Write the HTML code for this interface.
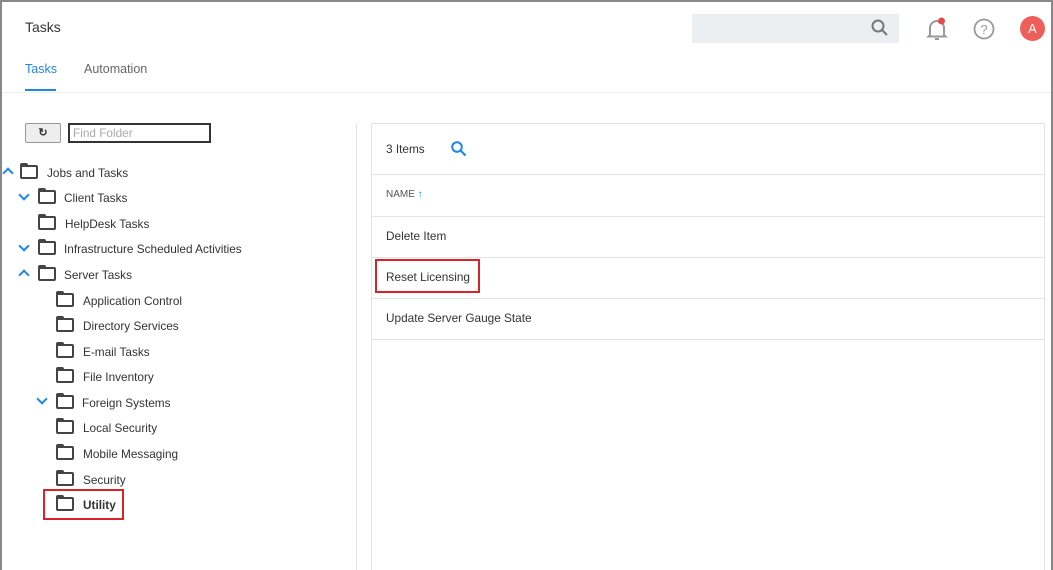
<!DOCTYPE html><html><head><style>
*{margin:0;padding:0;box-sizing:border-box}
body{width:1053px;height:570px;overflow:hidden;font-family:"Liberation Sans",sans-serif;color:#333;background:#fff;position:relative;font-size:11.8px}
.frame{position:absolute;inset:0;border:2px solid #888;border-bottom:none}
.a{position:absolute;white-space:nowrap}
.fold{position:absolute;width:18px;height:14px;border:2px solid #444;border-radius:2px;margin-top:1px}
.fold:before{content:"";position:absolute;left:-2px;top:-4px;width:8px;height:3px;background:#444;border-radius:2px 2px 0 0}
.chev{position:absolute;width:8px;height:8px;border-left:2px solid #1e88e5;border-top:2px solid #1e88e5}
.down{transform:rotate(225deg)}.up{transform:rotate(45deg)}
.hl{position:absolute;border:2px solid #d9222a}
.row{position:absolute;left:372px;width:672px;border-bottom:1px solid #e3e3e3}
</style></head><body>
<div class="frame"></div>
<div class="a" style="left:25px;top:19px;font-size:14px;color:#333">Tasks</div>
<div style="position:absolute;left:692px;top:14px;width:207px;height:29px;background:#eceff1"></div>
<svg class="a" style="left:870px;top:18px" width="20" height="20" viewBox="0 0 20 20"><circle cx="8" cy="8" r="5.5" fill="none" stroke="#777" stroke-width="2"/><path d="M12 12l5 5" stroke="#777" stroke-width="2"/></svg>
<svg class="a" style="left:924px;top:16px" width="26" height="26" viewBox="0 0 26 26"><path d="M6 19V12a7 7 0 0 1 14 0v7l1.5 1.5H4.5z" fill="none" stroke="#999" stroke-width="2"/><path d="M11 23h4" stroke="#999" stroke-width="2"/><circle cx="17.5" cy="5" r="3.5" fill="#e84a4a"/></svg>
<svg class="a" style="left:972px;top:17px" width="24" height="24" viewBox="0 0 24 24"><circle cx="12" cy="12" r="9.5" fill="none" stroke="#999" stroke-width="1.8"/><text x="12" y="17" font-size="13" text-anchor="middle" fill="#999" font-family="Liberation Sans">?</text></svg>
<div class="a" style="left:1020px;top:16px;width:25px;height:25px;border-radius:50%;background:#ee5f5b;color:#fff;text-align:center;line-height:25px;font-size:13px">A</div>
<div class="a" style="left:25px;top:62px;color:#1e88e5;font-size:12.5px">Tasks</div>
<div style="position:absolute;left:25px;top:89px;width:31px;height:2px;background:#1e88e5"></div>
<div class="a" style="left:84px;top:62px;color:#666;font-size:12.5px">Automation</div>
<div style="position:absolute;left:2px;top:92px;width:1049px;height:1px;background:#eee"></div>
<div class="a" style="left:25px;top:123px;width:36px;height:20px;border:1px solid #999;border-radius:2px;background:#eee;text-align:center;font-size:11px;line-height:18px;font-weight:bold">&#8635;</div>
<div class="a" style="left:68px;top:123px;width:143px;height:20px;border:2px solid #333;color:#aaa;padding-left:3px;line-height:16px">Find Folder</div>
<div style="position:absolute;left:356px;top:123px;width:1px;height:447px;background:#e3e3e3"></div>

<div class="chev up" style="left:4px;top:169px"></div><div class="fold" style="left:20px;top:164px"></div><div class="a" style="left:47px;top:166px">Jobs and Tasks</div>
<div class="chev down" style="left:20px;top:191px"></div><div class="fold" style="left:38px;top:189px"></div><div class="a" style="left:64px;top:191px">Client Tasks</div>
<div class="fold" style="left:38px;top:215px"></div><div class="a" style="left:65px;top:217px">HelpDesk Tasks</div>
<div class="chev down" style="left:20px;top:242px"></div><div class="fold" style="left:38px;top:240px"></div><div class="a" style="left:64px;top:242px">Infrastructure Scheduled Activities</div>
<div class="chev up" style="left:20px;top:271px"></div><div class="fold" style="left:38px;top:266px"></div><div class="a" style="left:64px;top:268px">Server Tasks</div>
<div class="fold" style="left:56px;top:292px"></div><div class="a" style="left:83px;top:294px">Application Control</div>
<div class="fold" style="left:56px;top:317px"></div><div class="a" style="left:83px;top:319px">Directory Services</div>
<div class="fold" style="left:56px;top:343px"></div><div class="a" style="left:83px;top:345px">E-mail Tasks</div>
<div class="fold" style="left:56px;top:368px"></div><div class="a" style="left:83px;top:370px">File Inventory</div>
<div class="chev down" style="left:38px;top:395px"></div><div class="fold" style="left:56px;top:394px"></div><div class="a" style="left:82px;top:396px">Foreign Systems</div>
<div class="fold" style="left:56px;top:419px"></div><div class="a" style="left:83px;top:421px">Local Security</div>
<div class="fold" style="left:56px;top:445px"></div><div class="a" style="left:83px;top:447px">Mobile Messaging</div>
<div class="fold" style="left:56px;top:471px"></div><div class="a" style="left:83px;top:473px">Security</div>
<div class="fold" style="left:56px;top:496px"></div><div class="a" style="left:83px;top:498px;font-weight:bold">Utility</div>
<div class="hl" style="left:43px;top:489px;width:81px;height:31px"></div>

<div style="position:absolute;left:371px;top:123px;width:674px;height:447px;border:1px solid #e3e3e3;border-bottom:none"></div>
<div class="a" style="left:386px;top:142px">3 Items</div>
<svg class="a" style="left:450px;top:140px" width="18" height="18" viewBox="0 0 18 18"><circle cx="7" cy="7" r="4.8" fill="none" stroke="#1e88e5" stroke-width="2"/><path d="M10.5 10.5l5 5" stroke="#1e88e5" stroke-width="2.2"/></svg>
<div class="row" style="top:174px;height:1px"></div>
<div class="a" style="left:386px;top:189px;font-size:10px;color:#555">NAME <span style="color:#1e88e5">&#8593;</span></div>
<div class="row" style="top:216px;height:1px"></div>
<div class="a" style="left:386px;top:229px">Delete Item</div>
<div class="row" style="top:257px;height:1px"></div>
<div class="a" style="left:386px;top:270px">Reset Licensing</div>
<div class="hl" style="left:375px;top:259px;width:105px;height:34px"></div>
<div class="row" style="top:298px;height:1px"></div>
<div class="a" style="left:386px;top:311px">Update Server Gauge State</div>
<div class="row" style="top:339px;height:1px"></div>
</body></html>
